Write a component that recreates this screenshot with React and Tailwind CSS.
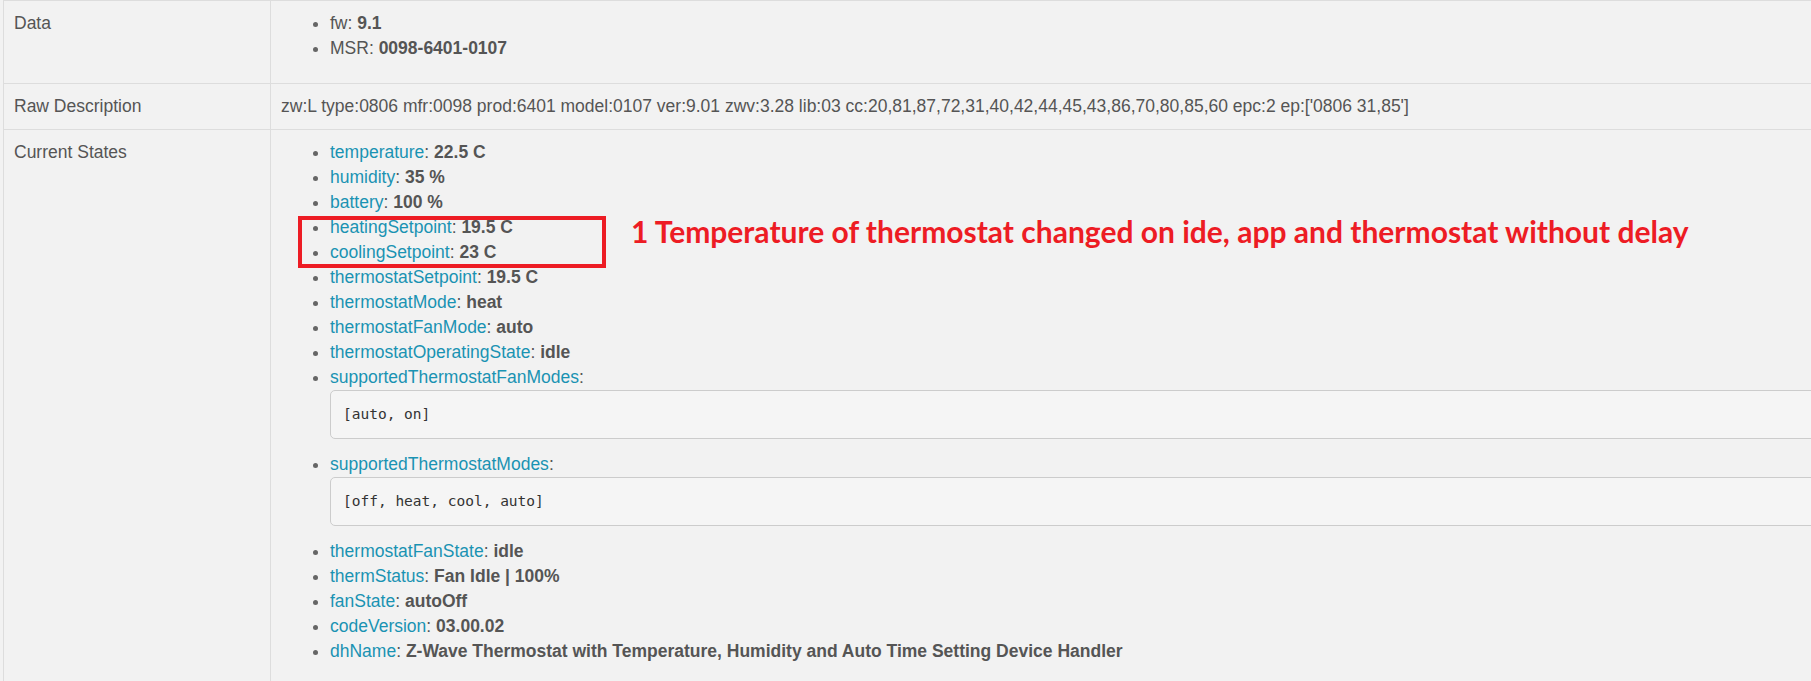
import React from "react";

const states = [
    ["temperature", "22.5 C"],
    ["humidity", "35 %"],
    ["battery", "100 %"],
    ["heatingSetpoint", "19.5 C"],
    ["coolingSetpoint", "23 C"],
    ["thermostatSetpoint", "19.5 C"],
    ["thermostatMode", "heat"],
    ["thermostatFanMode", "auto"],
    ["thermostatOperatingState", "idle"],
    ["supportedThermostatFanModes", null, "[auto, on]"],
    ["supportedThermostatModes", null, "[off, heat, cool, auto]"],
    ["thermostatFanState", "idle"],
    ["thermStatus", "Fan Idle | 100%"],
    ["fanState", "autoOff"],
    ["codeVersion", "03.00.02"],
    ["dhName", "Z-Wave Thermostat with Temperature, Humidity and Auto Time Setting Device Handler"],
];

function Row({ label, children, last }) {
    return (
        <div className={`flex ${last ? "" : "border-b border-[#ddd]"}`}>
            <div className="w-[267px] shrink-0 p-[10px] border-r border-[#ddd]">{label}</div>
            <div className="flex-1 p-[10px]">{children}</div>
        </div>
    );
}

export default function App() {
    return (
        <div className="relative w-[1811px] h-[681px] overflow-hidden bg-[#f2f2f2] text-[#555] text-[17.5px] leading-[25px] font-['Liberation_Sans',Arial,sans-serif]">
            <div className="ml-[3px] w-[1900px] border-l border-t border-[#ddd]">
                <Row label="Data">
                    <ul className="list-disc pl-[49px] mb-[12px] marker:text-[#666]">
                        <li>fw: <b>9.1</b></li>
                        <li>MSR: <b>0098-6401-0107</b></li>
                    </ul>
                </Row>
                <Row label="Raw Description">
                    zw:L type:0806 mfr:0098 prod:6401 model:0107 ver:9.01 zwv:3.28 lib:03 cc:20,81,87,72,31,40,42,44,45,43,86,70,80,85,60 epc:2 ep:['0806 31,85']
                </Row>
                <Row label="Current States" last>
                    <ul className="list-disc pl-[49px] mb-[12px] marker:text-[#666]">
                        {states.map(([name, value, pre]) => (
                            <li key={name}>
                                <span className="text-[#1a93b3]">{name}</span>:{" "}
                                {value && <b>{value}</b>}
                                {pre && (
                                    <pre className="mb-[13px] p-[12px] border border-[#ccc] rounded-[5px] bg-[#f5f5f5] text-[#333] text-[14.5px] leading-[23px] font-['DejaVu_Sans_Mono',monospace]">
                                        {pre}
                                    </pre>
                                )}
                            </li>
                        ))}
                    </ul>
                </Row>
            </div>

            {/* annotation drawn over the screenshot */}
            <div className="absolute left-[298px] top-[216px] w-[308px] h-[52px] border-4 border-[#ed1c24]" />
            <div className="absolute left-[631px] top-[212px] text-[30px] leading-[38px] font-bold text-[#ed1c24] font-['Lato',sans-serif] whitespace-nowrap">
                1 Temperature of thermostat changed on ide, app and thermostat without delay
            </div>
        </div>
    );
}
